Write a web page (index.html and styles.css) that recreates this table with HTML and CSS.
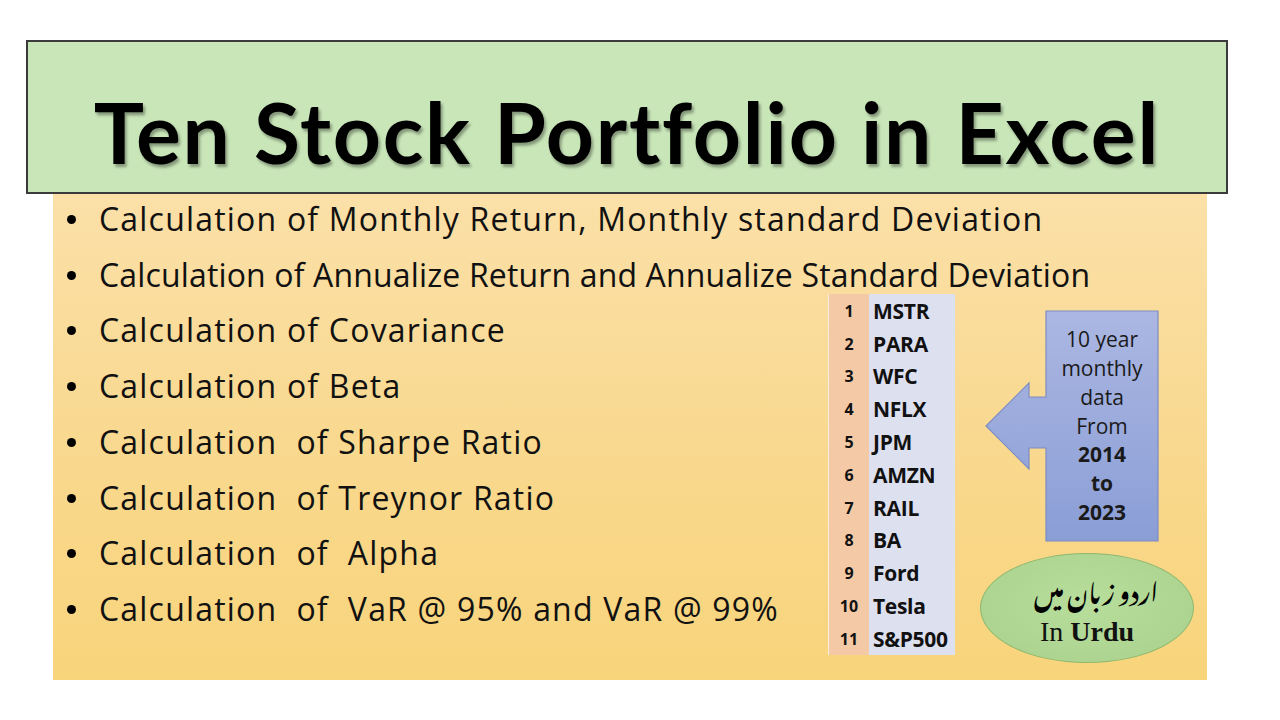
FILE: index.html
```html
<!DOCTYPE html>
<html lang="en">
<head>
<meta charset="utf-8">
<title>Ten Stock Portfolio in Excel</title>
<link rel="stylesheet" href="styles.css">
</head>
<body>
<div class="slide">
  <header class="title-box">
    <h1 class="title">Ten Stock Portfolio in Excel</h1>
  </header>
  <section class="panel">
    <ul class="bullets wide">
      <li>Calculation of Monthly Return, Monthly standard Deviation</li>
      <li class="tight">Calculation of Annualize Return and Annualize Standard Deviation</li>
    </ul>
    <ul class="bullets narrow">
      <li>Calculation of Covariance</li>
      <li>Calculation of Beta</li>
      <li>Calculation &nbsp;of Sharpe Ratio</li>
      <li>Calculation &nbsp;of Treynor Ratio</li>
      <li>Calculation &nbsp;of &nbsp;Alpha</li>
      <li>Calculation &nbsp;of &nbsp;VaR @ 95% and VaR @ 99%</li>
    </ul>
    <table class="stocks">
      <tbody>
        <tr><td class="num">1</td><td class="tick">MSTR</td></tr>
        <tr><td class="num">2</td><td class="tick">PARA</td></tr>
        <tr><td class="num">3</td><td class="tick">WFC</td></tr>
        <tr><td class="num">4</td><td class="tick">NFLX</td></tr>
        <tr><td class="num">5</td><td class="tick">JPM</td></tr>
        <tr><td class="num">6</td><td class="tick">AMZN</td></tr>
        <tr><td class="num">7</td><td class="tick">RAIL</td></tr>
        <tr><td class="num">8</td><td class="tick">BA</td></tr>
        <tr><td class="num">9</td><td class="tick">Ford</td></tr>
        <tr><td class="num">10</td><td class="tick">Tesla</td></tr>
        <tr><td class="num">11</td><td class="tick">S&amp;P500</td></tr>
      </tbody>
    </table>
    <div class="side">
      <div class="callout">
        <svg class="callout-shape" width="175" height="233" viewBox="0 0 175 233" aria-hidden="true">
          <defs>
            <linearGradient id="cg" x1="0" y1="0" x2="0" y2="1">
              <stop offset="0" stop-color="#acb7e2"/>
              <stop offset="1" stop-color="#8a9ed6"/>
            </linearGradient>
          </defs>
          <path d="M1 116 L44 73 L44 87 L61 87 L61 1 L173 1 L173 231 L61 231 L61 138 L44 138 L44 159 Z" fill="url(#cg)" stroke="#7d8cc2" stroke-width="1.2"/>
        </svg>
        <div class="callout-text">
          <span>10 year</span>
          <span>monthly</span>
          <span>data</span>
          <span>From</span>
          <b>2014</b>
          <b>to</b>
          <b>2023</b>
        </div>
      </div>
      <div class="urdu-badge">
        <span class="urdu" lang="ur" dir="rtl">اردو زبان میں</span>
        <span class="in-urdu">In <b>Urdu</b></span>
      </div>
    </div>
  </section>
</div>
</body>
</html>
```

FILE: styles.css
```css
html, body {
  margin: 0;
  padding: 0;
  background: #ffffff;
}

body {
  font-family: "Open Sans", "Lato", sans-serif;
  color: #111;
}

.slide {
  width: 1280px;
  height: 720px;
  padding-top: 40px;
  box-sizing: border-box;
}

.title-box {
  margin-left: 26px;
  width: 1202px;
  height: 154px;
  box-sizing: border-box;
  background: #c9e6b9;
  border: 2px solid #3b3b3b;
  display: flex;
  align-items: center;
  justify-content: center;
}

.title {
  margin: 0;
  font-family: "Lato", sans-serif;
  font-weight: 700;
  font-size: 84px;
  letter-spacing: 1.8px;
  line-height: 1;
  color: #000;
  text-shadow: 2px 3px 3px rgba(0, 0, 0, 0.35);
  padding-top: 30px;
}

.panel {
  margin-left: 53px;
  width: 1154px;
  height: 486px;
  box-sizing: border-box;
  background: linear-gradient(180deg, #fbe0a8 0%, #f9d990 50%, #f8d47b 100%);
  display: grid;
  grid-template-columns: 750px 127px 214px;
  column-gap: 25px;
  grid-template-rows: auto 1fr;
  align-items: start;
}

.bullets {
  list-style: none;
  margin: 0;
  padding: 0 0 0 46px;
  font-size: 32px;
  letter-spacing: 1.2px;
  line-height: 55.7px;
  color: #111;
}

.bullets li {
  position: relative;
  white-space: nowrap;
}

.bullets li.tight {
  letter-spacing: 0.15px;
}

.bullets li::before {
  content: "";
  position: absolute;
  left: -32px;
  top: 24px;
  width: 9px;
  height: 9px;
  border-radius: 50%;
  background: #000;
}

.wide {
  grid-column: 1 / 4;
  margin-top: -3px;
}

.narrow {
  grid-column: 1;
}

.stocks {
  grid-column: 2;
  margin-top: -8px;
  border-collapse: collapse;
  width: 127px;
  border-left: 1px solid #fbeedd;
}

.stocks td {
  height: 32.8px;
  padding: 0;
  font-weight: 700;
  color: #111;
}

.stocks .num {
  width: 40px;
  background: #f3c9a6;
  text-align: center;
  font-size: 16px;
}

.stocks .tick {
  background: #dde0ef;
  font-size: 21px;
  padding-left: 4px;
  letter-spacing: -0.3px;
}

.side {
  grid-column: 3;
  display: flex;
  flex-direction: column;
  margin-top: 8px;
}

.callout {
  position: relative;
  width: 175px;
  height: 233px;
  margin-left: 5px;
}

.callout-shape {
  position: absolute;
  left: 0;
  top: 0;
}

.callout-text {
  position: relative;
  margin-left: 61px;
  width: 112px;
  height: 231px;
  display: flex;
  flex-direction: column;
  align-items: center;
  justify-content: center;
  font-size: 21px;
  line-height: 28.7px;
  color: #1a1a1a;
}

.callout-text b {
  font-weight: 700;
}

.urdu-badge {
  margin-top: 10px;
  width: 214px;
  height: 110px;
  box-sizing: border-box;
  padding-top: 14px;
  border-radius: 50%;
  border: 1.5px solid #8cb86f;
  background: radial-gradient(ellipse at 50% 45%, #b8dd9c 0%, #add591 70%, #a4cf88 100%);
  display: flex;
  flex-direction: column;
  align-items: center;
}

.urdu {
  font-family: "Noto Nastaliq Urdu", "Noto Naskh Arabic", "Noto Sans Arabic", "DejaVu Sans", sans-serif;
  font-weight: 700;
  font-size: 24px;
  line-height: 40px;
  color: #000;
  margin-left: 18px;
}

.in-urdu {
  margin-top: 6px;
  font-family: "Liberation Serif", serif;
  font-size: 28px;
  line-height: 36px;
  color: #111;
}

.in-urdu b {
  font-weight: 700;
}
```
